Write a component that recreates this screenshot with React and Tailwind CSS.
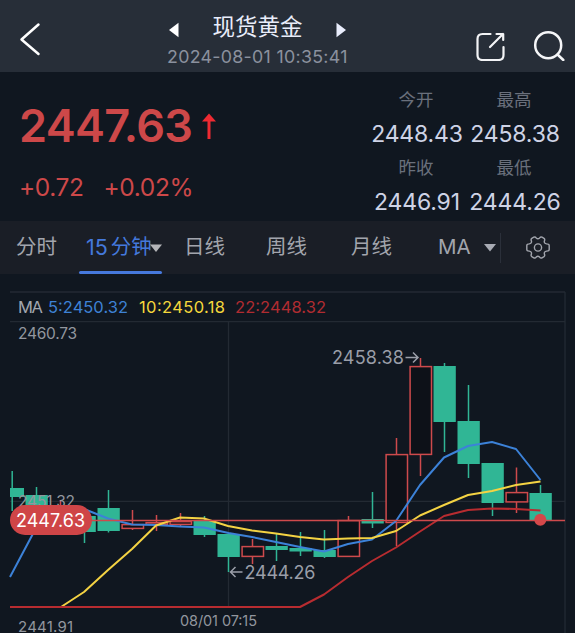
import React from 'react';

// x: centre of the candle, top/bottom: the body, hi/lo: the wick
const candles = [
  { x: 36.5, top: 495, bottom: 506, hi: 487, lo: 512, up: false },
  { x: 60.5, top: 508, bottom: 514, hi: 500, lo: 520, up: true },
  { x: 84.5, top: 516, bottom: 532, hi: 512, lo: 543, up: false },
  { x: 108.5, top: 508, bottom: 531, hi: 490, lo: 532.5, up: false },
  { x: 132.5, top: 524, bottom: 529, hi: 510, lo: 530, up: true },
  { x: 156.5, top: 522, bottom: 525, hi: 515, lo: 531, up: true },
  { x: 180.5, top: 521, bottom: 525, hi: 513, lo: 526, up: true },
  { x: 204.5, top: 521, bottom: 535, hi: 516, lo: 537, up: false },
  { x: 228.5, top: 534, bottom: 557, hi: 534, lo: 572, up: false },
  { x: 252.5, top: 546, bottom: 557, hi: 539, lo: 564, up: true },
  { x: 276.5, top: 546, bottom: 550, hi: 534, lo: 561, up: false },
  { x: 300.5, top: 548, bottom: 551.5, hi: 532, lo: 556, up: false },
  { x: 324.5, top: 550, bottom: 557, hi: 530, lo: 558, up: false },
  { x: 348.5, top: 520, bottom: 557, hi: 516, lo: 557, up: true },
  { x: 372.5, top: 519, bottom: 523.5, hi: 492, lo: 528, up: false },
  { x: 396.5, top: 454, bottom: 523, hi: 438, lo: 546, up: true },
  { x: 420.5, top: 366, bottom: 455, hi: 358, lo: 476, up: true },
  { x: 444.5, top: 366, bottom: 422, hi: 363, lo: 452, up: false },
  { x: 468.5, top: 421, bottom: 464, hi: 385, lo: 478, up: false },
  { x: 492.5, top: 463, bottom: 503, hi: 463, lo: 516, up: false },
  { x: 516.5, top: 492, bottom: 502.5, hi: 467.5, lo: 513, up: true },
  { x: 540.5, top: 493, bottom: 520, hi: 485, lo: 520, up: false },
];

const ma5 = "10,577 36,528 60,508 84,509 108,518.5 132,524.5 156,525 180,526.5 204,527.5 228.5,533 252,537 276,542 300,547 324,551.5 348,544 372,539.5 396,521 420,485 444,457.5 468,446 492,442 516,449 540.5,480";
const ma10 = "61,607 84,592 108,570 132,549 156,525.5 180,517.5 204,518.5 228,526 252,530.5 276,533.5 300,537 324,539.5 348,538.5 372,538 396,531 420,515.5 444,505 468,495 492,491 516,485 540.5,481.5";
const ma22 = "10,607 300,607 324,594.5 348,577 372,561 396,547.5 420,531.5 444,516 468,510 492,508.5 516,509 540.5,510.5";

const quotes = [
  { label: "今开", value: "2448.43" },
  { label: "最高", value: "2458.38" },
  { label: "昨收", value: "2446.91" },
  { label: "最低", value: "2444.26" },
];

const Candle = ({ x, top, bottom, hi, lo, up }) => {
  const color = up ? "#ce4a4c" : "#30b695";
  return (
    <g>
      <line x1={x} x2={x} y1={hi} y2={lo} stroke={color} strokeWidth="1.5" />
      {up ? (
        <rect x={x - 10.4} y={top + 0.6} width="21.4" height={bottom - top - 1.2} fill="#0d1118" stroke={color} strokeWidth="1.5" />
      ) : (
        <rect x={x - 11} y={top} width="22.3" height={bottom - top} fill={color} />
      )}
    </g>
  );
};

const Header = () => (
  <header className="flex h-[72px] bg-[#272e38]">
    <div className="w-[167px] shrink-0 pt-[21px] pl-[18px]">
      <svg className="h-9 w-6" viewBox="0 0 24 36" fill="none" stroke="#fff" strokeWidth="2.5" strokeLinecap="round" strokeLinejoin="round">
        <path d="M20.5 3.5L3.5 18.5L20.5 33" />
      </svg>
    </div>
    <div className="w-[182px] shrink-0 pt-[10px]">
      <div className="flex h-[34px] items-center justify-between pr-[3px] pl-[2px]">
        <svg className="mt-[6px] h-4 w-[10px]" viewBox="0 0 10 16" fill="#fff"><path d="M0 8L9.5 0.8V15.2Z" /></svg>
        <h1 className="text-[22.5px] leading-[34px] text-[#e9edfa]">现货黄金</h1>
        <svg className="mt-[6px] h-4 w-[10px]" viewBox="0 0 10 16" fill="#e9edfc"><path d="M10 8L0.5 0.8V15.2Z" /></svg>
      </div>
      <p className="text-[17.8px] leading-[25px] tracking-[0.3px] whitespace-nowrap text-[#8b919e]">2024-08-01 10:35:41</p>
    </div>
    <div className="flex grow justify-end gap-[27px] pt-[29px] pr-[10px]">
      <svg className="h-8 w-8" viewBox="0 0 32 32" fill="none" stroke="#f3f4f6" strokeWidth="2.2" strokeLinecap="round">
        <path d="M16.5 5H8.5Q3.5 5 3.5 10V26Q3.5 31 8.5 31H24.5Q29.5 31 29.5 26V18" />
        <path d="M16 18L29 5M22.5 5H29.2V11" strokeLinejoin="round" />
      </svg>
      <svg className="h-8 w-8" viewBox="0 0 32 32" fill="none" stroke="#f5f6f8" strokeWidth="2.5" strokeLinecap="round">
        <circle cx="15.2" cy="16.2" r="13" />
        <path d="M24.5 25.5L30.3 31" />
      </svg>
    </div>
  </header>
);

const Quote = () => (
  <section className="flex h-[149px] justify-between pr-[14px] pl-[19px]">
    <div className="pt-[28px] text-[#cd4849]">
      <div className="flex items-start">
        <span className="text-[45px] leading-[52px] font-semibold tracking-[-0.7px]">2447.63</span>
        <svg className="mt-[13px] ml-[9px] h-7 w-4" viewBox="0 0 16 28"><path d="M8 0.5L15 8.5H9.5V26H6.5V8.5H1Z" fill="#ee2a32" /></svg>
      </div>
      <div className="mt-[20px] flex gap-[20px] text-[24.5px] leading-[30px] tracking-[-0.4px]">
        <span>+0.72</span>
        <span>+0.02%</span>
      </div>
    </div>
    <div className="grid grid-cols-[92px_92px] content-start gap-x-[6px] pt-[16px] text-center">
      {quotes.map((q) => (
        <div key={q.label} className="h-[67.5px]">
          <div className="pr-[2px] text-[17.5px] leading-6 text-[#6a707c]">{q.label}</div>
          <div className="flex justify-center text-[23px] leading-[44px] tracking-[-0.15px] whitespace-nowrap text-[#ced3e6]">{q.value}</div>
        </div>
      ))}
    </div>
  </section>
);

const Tabs = () => (
  <nav className="flex h-[53px] items-center bg-[#1a1e26] text-[20.5px] leading-none text-[#a2a5ad]">
    <span className="w-[79px] pl-4">分时</span>
    <div className="flex h-full w-[83px] flex-col">
      <div className="flex grow items-center pt-[3px] pl-[7px] text-[#4479dc]">
        <span className="flex w-[67px] shrink-0 gap-[3px] whitespace-nowrap"><span className="text-[21.5px]">15</span>分钟</span>
        <svg className="-ml-[3px] h-2 w-3 shrink-0" viewBox="0 0 12 8" fill="#b4b5b8"><path d="M0 0.5H12L6 8Z" /></svg>
      </div>
      <div className="h-[3px] rounded-full bg-[#4679dd]" />
    </div>
    <span className="w-[82px] pl-[22px]">日线</span>
    <span className="w-[84px] pl-[22px]">周线</span>
    <span className="w-[110px] pl-[23px]">月线</span>
    <div className="flex h-[30px] w-[63px] items-center justify-between border-r border-[#2b303a] pr-[4px]">
      <span className="text-[20.5px]">MA</span>
      <svg className="h-2 w-3" viewBox="0 0 12 8" fill="#a8abb3"><path d="M0 0H12L6 7.5Z" /></svg>
    </div>
    <svg className="ml-[24px] h-[26px] w-[26px]" viewBox="0 0 26 26" fill="none" stroke="#a2a5ad" strokeWidth="1.4" strokeLinejoin="round">
      <path d="M8.8 2.2Q10.3 1.6 11.2 2.9Q12.9 4.4 14.6 2.9Q15.6 1.6 17 2.2L19 3.4Q20.2 4.3 19.4 5.9Q18.8 8.4 21.6 8.9Q24.2 9 24.2 10.5V14.5Q24.2 16 21.6 16.1Q18.8 16.6 19.4 19.1Q20.2 20.7 19 21.6L17 22.8Q15.6 23.4 14.6 22.1Q12.9 20.6 11.2 22.1Q10.3 23.4 8.8 22.8L6.8 21.6Q5.6 20.7 6.4 19.1Q7 16.6 4.2 16.1Q1.8 16 1.8 14.5V10.5Q1.8 9 4.2 8.9Q7 8.4 6.4 5.9Q5.6 4.3 6.8 3.4Z" />
      <circle cx="13" cy="12.5" r="3.6" />
    </svg>
  </nav>
);

const Chart = () => (
  <svg className="block h-[359px] w-full" viewBox="0 274 575 359">
    <g stroke="#232a33" strokeWidth="1.3">
      <path d="M10 292H565M10 321.7H565M10 501.3H565M228.5 322V607M565 292V633" fill="none" />
    </g>

    <g fontSize="16.5">
      <text x="18" y="312.5" fill="#a2a6ae" textLength="25">MA</text>
      <text x="48" y="312.5" fill="#3e82d5" textLength="80">5:2450.32</text>
      <text x="139" y="312.5" fill="#f5d83c" textLength="86">10:2450.18</text>
      <text x="235" y="312.5" fill="#b02c31" textLength="91">22:2448.32</text>
    </g>

    <rect x="10" y="488" width="14" height="9" fill="#30b695" />
    <line x1="12.2" x2="12.2" y1="471" y2="511" stroke="#30b695" strokeWidth="1.5" />
    {candles.map((c) => (
      <Candle key={c.x} {...c} />
    ))}

    {/* moving averages */}
    <g fill="none" strokeWidth="2" strokeLinejoin="round">
      <polyline points={ma5} stroke="#3c82d8" />
      <polyline points={ma10} stroke="#f4d343" />
      <polyline points={ma22} stroke="#b82c30" />
    </g>

    <g fill="#92969e" fontSize="15.5">
      <text x="18" y="339" textLength="59">2460.73</text>
      <text x="18" y="507" textLength="57">2451.32</text>
      <text x="18" y="631.5" fontSize="15" textLength="55">2441.91</text>
      <text x="180" y="626" fontSize="14.5" textLength="77">08/01 07:15</text>
    </g>
    <g fill="#9a9ea8" fontSize="18">
      <text x="332" y="364" textLength="72">2458.38</text>
      <text x="244.5" y="578.5" textLength="71">2444.26</text>
    </g>
    <g fill="none" stroke="#9a9ea8" strokeWidth="1.5">
      <path d="M405.5 357.5H418M413 352.5L418 357.5L413 362.5" />
      <path d="M242.5 572H230.5M235.5 567L230.5 572L235.5 577" />
    </g>

    {/* last price */}
    <line x1="10" x2="565" y1="520.5" y2="520.5" stroke="#ce4a4c" strokeWidth="1.5" />
    <circle cx="540.3" cy="519.8" r="6" fill="#d5484a" />
    <rect x="10" y="505" width="82" height="30" rx="15" fill="#cf4547" />
    <text x="16" y="526.5" fill="#fff" fontSize="18" textLength="69">2447.63</text>
  </svg>
);

const App = () => {
  return (
    <div className="h-[633px] w-[575px] overflow-hidden bg-[#101720] font-['Inter','Noto_Sans_CJK_SC',sans-serif]">
      <Header />
      <Quote />
      <Tabs />
      <Chart />
    </div>
  );
};

export default App;
